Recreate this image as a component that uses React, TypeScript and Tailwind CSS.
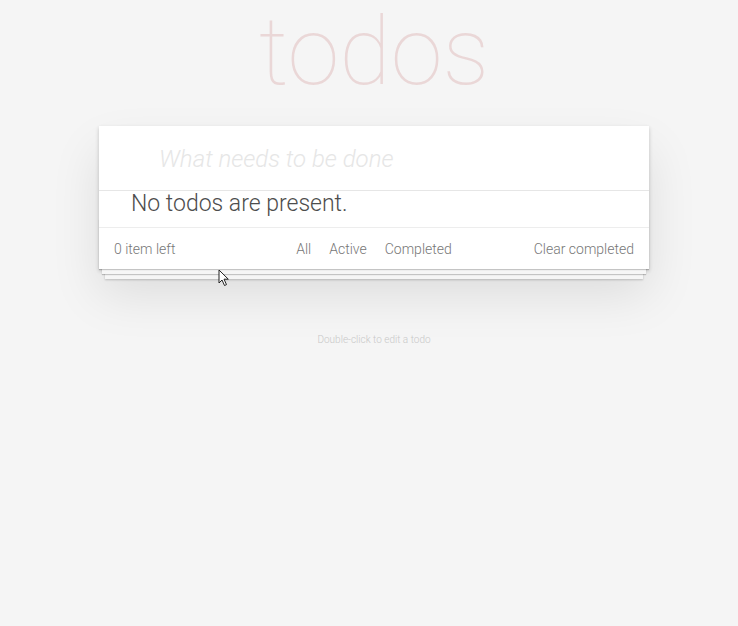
import React from 'react';

const font = "font-['Roboto','Helvetica_Neue',Helvetica,Arial,sans-serif]";

function Cursor() {
  return (
    <svg
      className="absolute left-[218px] top-[269px]"
      width="12"
      height="18"
      viewBox="0 0 12 18"
    >
      <path d="M1 1 L1 14 L4 11 L6.5 16.5 L8.5 15.6 L6 10.2 L10.3 10.2 Z" fill="#fff" stroke="#222" strokeWidth="1" strokeLinejoin="round" />
    </svg>
  );
}

export default function App() {
  return (
    <div className={`relative min-h-[626px] w-full bg-[#f5f5f5] text-[#4d4d4d] ${font}`}>
      <div className="flex flex-col items-center pl-[10px]">
        <div className="flex h-[126px] items-start">
          <h1 className="text-[94px] font-thin leading-[104px] text-[rgba(175,47,47,0.15)]">todos</h1>
        </div>
        <section className="relative w-[550px] bg-white shadow-[0_2px_4px_0_rgba(0,0,0,0.2),0_25px_50px_0_rgba(0,0,0,0.1)]">
          <div className="flex h-[65px] items-center border-b border-[#e6e6e6] pl-[60px] pr-4">
            <input
              className="w-full bg-transparent pt-[2px] text-[24px] font-light italic outline-none placeholder:text-[#e6e6e6] placeholder:italic"
              placeholder="What needs to be done"
            />
          </div>
          <div className="flex h-[37px] items-center border-b border-[#ededed] pb-[11px] pl-[32px] text-[23px] font-light leading-none text-[#4d4d4d]">
            No todos are present.
          </div>
          <footer className="relative flex h-[41px] items-center px-[15px] pt-[2px] text-[14px] font-light text-[#777]">
            <div className="absolute inset-x-0 bottom-0 h-[50px] overflow-hidden shadow-[0_1px_1px_rgba(0,0,0,0.2),0_8px_0_-3px_#f6f6f6,0_9px_1px_-3px_rgba(0,0,0,0.2),0_16px_0_-6px_#f6f6f6,0_17px_2px_-6px_rgba(0,0,0,0.2)]" />
            <div className="absolute inset-0 bg-white" />
            <span className="relative w-[160px]">0 item left</span>
            <ul className="relative flex flex-1 justify-center gap-[18px]">
              <li>All</li>
              <li>Active</li>
              <li>Completed</li>
            </ul>
            <span className="relative w-[160px] text-right">Clear completed</span>
          </footer>
        </section>
        <p className="mt-[63px] text-[10px] font-light text-[#c8c8c8]">Double-click to edit a todo</p>
      </div>
      <Cursor />
    </div>
  );
}
